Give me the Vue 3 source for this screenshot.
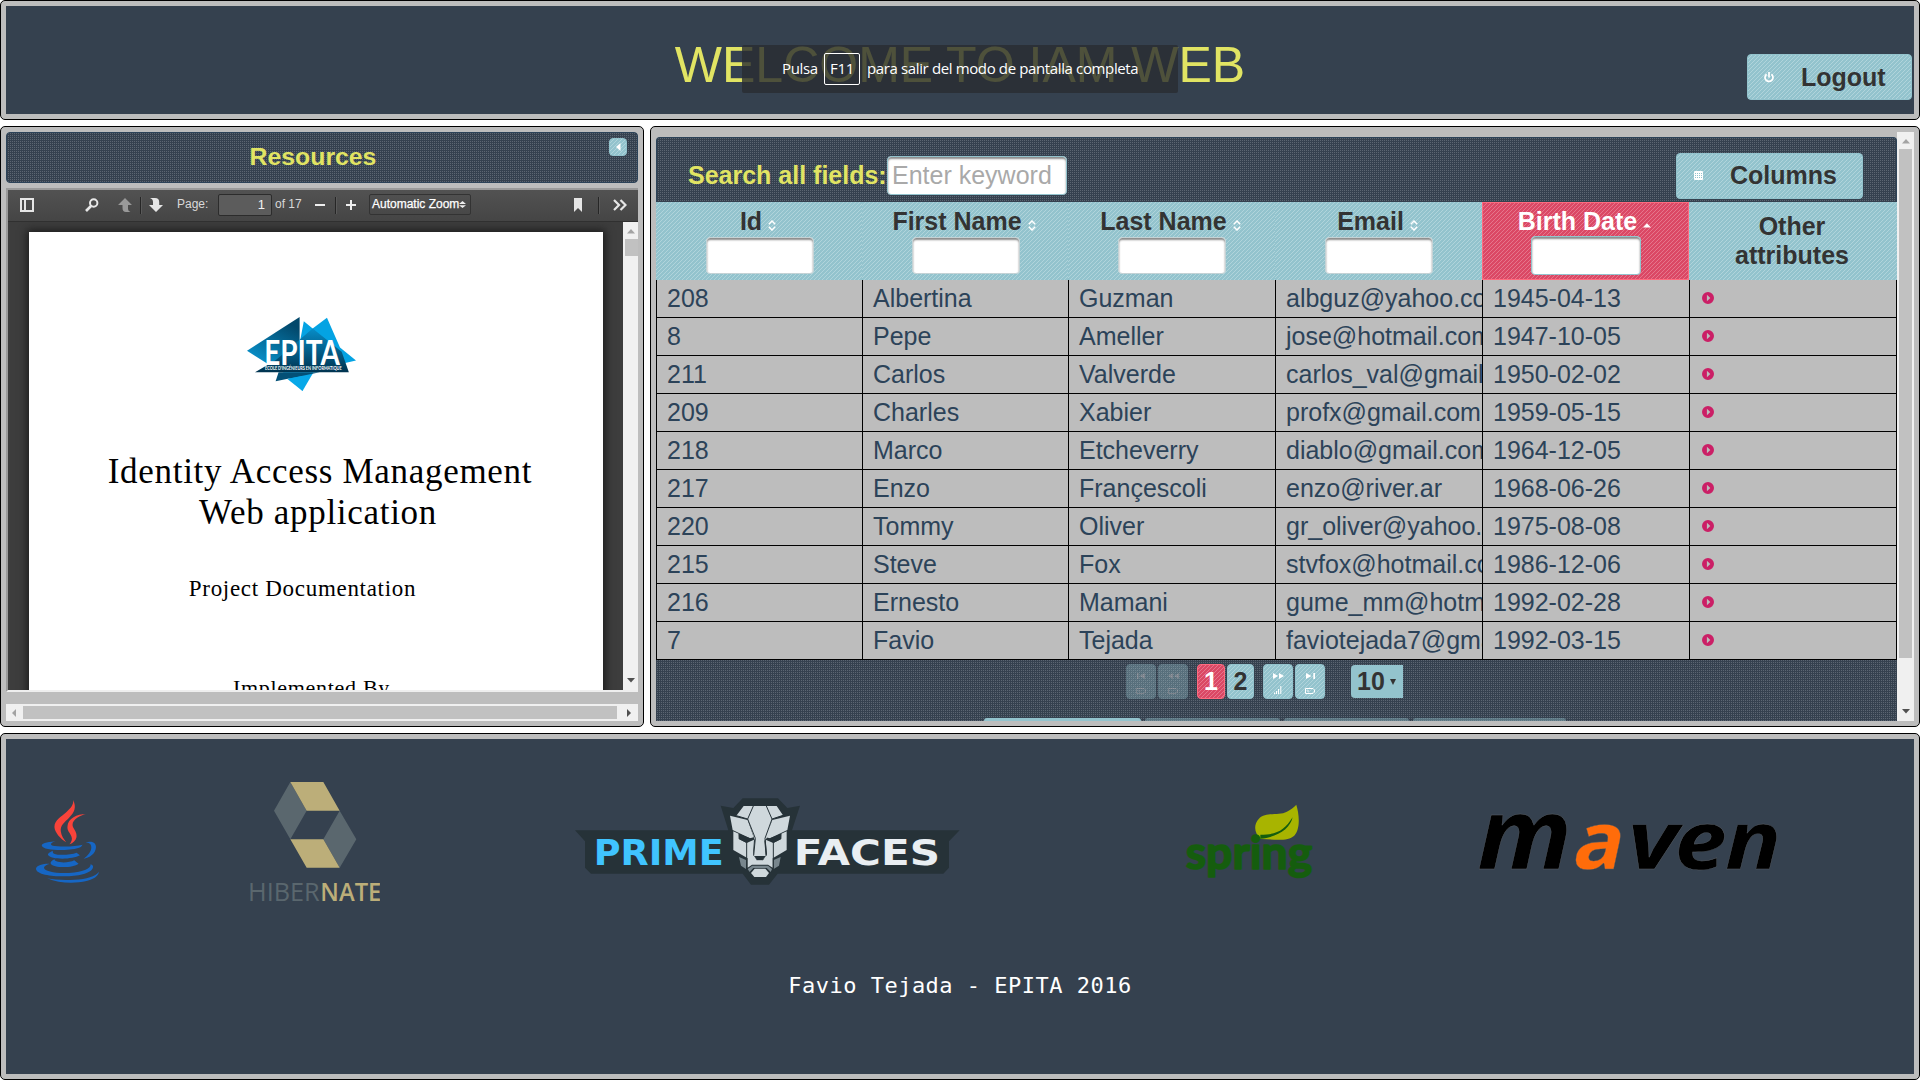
<script setup>
const columns = [
  { label: 'Id', sort: 'both', filter: true },
  { label: 'First Name', sort: 'both', filter: true },
  { label: 'Last Name', sort: 'both', filter: true },
  { label: 'Email', sort: 'both', filter: true },
  { label: 'Birth Date', sort: 'asc', filter: true, active: true },
  { label: 'Other attributes' },
]

const rows = [
  ['208', 'Albertina', 'Guzman', 'albguz@yahoo.com', '1945-04-13'],
  ['8', 'Pepe', 'Ameller', 'jose@hotmail.com', '1947-10-05'],
  ['211', 'Carlos', 'Valverde', 'carlos_val@gmail.com', '1950-02-02'],
  ['209', 'Charles', 'Xabier', 'profx@gmail.com', '1959-05-15'],
  ['218', 'Marco', 'Etcheverry', 'diablo@gmail.com', '1964-12-05'],
  ['217', 'Enzo', 'Françescoli', 'enzo@river.ar', '1968-06-26'],
  ['220', 'Tommy', 'Oliver', 'gr_oliver@yahoo.com', '1975-08-08'],
  ['215', 'Steve', 'Fox', 'stvfox@hotmail.com', '1986-12-06'],
  ['216', 'Ernesto', 'Mamani', 'gume_mm@hotmail.com', '1992-02-28'],
  ['7', 'Favio', 'Tejada', 'faviotejada7@gmail.com', '1992-03-15'],
]
</script>

<template>
  <div class="page">
    <header class="pane north">
      <div class="pane-body north-body">
        <h1>WELCOME TO IAM WEB</h1>
        <button class="btn diag logout">
          <svg width="10" height="11" viewBox="0 0 10 11" fill="none" stroke="#fff" stroke-width="1.7">
            <path d="M2.6 2.2A4 4 0 1 0 7.4 2.2M5 0V5.6" />
          </svg>
          <span>Logout</span>
        </button>
      </div>
      <div class="toast">
        <span>Pulsa</span><kbd>F11</kbd><span class="long">para salir del modo de pantalla completa</span>
      </div>
    </header>

    <section class="pane west">
      <div class="west-title dots">
        <h2>Resources</h2>
        <button class="toggler diag">
          <svg width="5" height="8" viewBox="0 0 5 8"><path d="M4.5 0V8L0 4Z" fill="#fff" /></svg>
        </button>
      </div>

      <div class="frame">
        <div class="toolbar">
          <svg class="ic-side" width="14" height="14" viewBox="0 0 14 14"><path fill-rule="evenodd" fill="#e6e6e6" d="M0 0H14V14H0ZM2 2V12H4V2ZM6 2V12H12V2Z" /></svg>
          <svg class="ic-search" width="14" height="14" viewBox="0 0 14 14" fill="none" stroke="#e8e8e8"><circle cx="8.7" cy="5" r="3.7" stroke-width="2" /><path d="M6 8 1 13" stroke-width="2.6" /></svg>
          <svg class="ic-up" width="14" height="14" viewBox="0 0 14 14"><path fill="#999" d="M7 0 14 7H10V11Q10 13 12.5 14H8Q4.500 14 4.500 10V7H0Z" /></svg>
          <i class="sep"></i>
          <svg class="ic-down" width="14" height="14" viewBox="0 0 14 14"><path fill="#e6e6e6" d="M7 14 14 7H10.200V4Q10.200 0 6 0H1Q4 1 4 4V7H0Z" /></svg>
          <span class="tb-label">Page:</span>
          <span class="tb-page">1</span>
          <span class="tb-of">of 17</span>
          <svg class="ic-minus" width="10" height="10" viewBox="0 0 10 10"><path fill="#eee" d="M0 4H10V6H0Z" /></svg>
          <i class="sep"></i>
          <svg class="ic-plus" width="10" height="10" viewBox="0 0 10 10"><path fill="#eee" d="M0 4H4V0H6V4H10V6H6V10H4V6H0Z" /></svg>
          <span class="tb-zoom">Automatic Zoom<svg width="7" height="7" viewBox="0 0 7 7"><path fill="#eee" d="M0 3 3.500 0 7 3ZM0 4.200H7L3.500 7Z" /></svg></span>
          <svg class="ic-mark" width="8" height="14" viewBox="0 0 8 14"><path fill="#e6e6e6" d="M0 0H8V14L4 10 0 14Z" /></svg>
          <i class="sep"></i>
          <svg class="ic-more" width="14" height="12" viewBox="0 0 14 12" fill="none" stroke="#e6e6e6" stroke-width="2.200"><path d="M1 1 6 6 1 11M7.500 1 12.500 6 7.500 11" /></svg>
        </div>
        <div class="viewer">
          <div class="doc">
            <svg class="epita" viewBox="587 621 259 221" preserveAspectRatio="none">
              <defs>
                <linearGradient id="ea" x1="0" y1="1" x2="0.6" y2="0"><stop offset="0" stop-color="#0aa0de" /><stop offset="1" stop-color="#02486b" /></linearGradient>
                <linearGradient id="eb" x1="0" y1="0" x2="0" y2="1"><stop offset="0" stop-color="#078dc8" /><stop offset="1" stop-color="#00334f" /></linearGradient>
              </defs>
              <path d="M587 722 712 621V700L700 740 650 772Z" fill="url(#ea)" />
              <path d="M712 700 722 634 743 655 777 623 808 712 846 751 815 760 720 770Z" fill="#04a3e3" />
              <path d="M655 750 743 655 812 725 829 786H606Z" fill="url(#eb)" />
              <path d="M672 786H745L719 842Z" fill="#08a8e8" />
              <path d="M662 786H760L655 813Z" fill="#035076" />
              <path d="M719 797V842L683 806Z" fill="#08a8e8" />
              <text x="628" y="764" textLength="180" lengthAdjust="spacingAndGlyphs" class="epita-name">EPITA</text>
              <text x="630" y="780" textLength="182" lengthAdjust="spacingAndGlyphs" class="epita-sub">ÉCOLE D'INGÉNIEURS EN INFORMATIQUE</text>
            </svg>
            <p class="doc-title">Identity Access Management</p>
            <p class="doc-title second">Web application</p>
            <p class="doc-sub">Project Documentation</p>
            <p class="doc-by">Implemented By</p>
          </div>
          <div class="vbar thin">
            <svg width="8" height="5" viewBox="0 0 8 5"><path d="M0 4.500 4 0 8 4.500Z" fill="#a3a3a3" /></svg>
            <i class="thumb"></i>
            <svg width="8" height="5" viewBox="0 0 8 5"><path d="M0 0H8L4 4.500Z" fill="#505050" /></svg>
          </div>
        </div>
      </div>

      <div class="hbar">
        <svg width="4" height="8" viewBox="0 0 4 8"><path d="M4 0V8L0 4Z" fill="#a3a3a3" /></svg>
        <i class="thumb"></i>
        <svg width="4" height="8" viewBox="0 0 4 8"><path d="M0 0V8L4 4Z" fill="#505050" /></svg>
      </div>
    </section>

    <main class="pane center">
      <div class="table-area">
        <div class="table-head dots">
          <label>Search all fields:</label>
          <input class="search" placeholder="Enter keyword" />
          <button class="btn diag columns">
            <svg width="9" height="9" viewBox="0 0 9 9"><rect width="9" height="9" rx="1" fill="#fff" /><path d="M1 2.500h7M1 4.500h7M1 6.500h7" stroke="#93c3cd" stroke-width="1" stroke-dasharray="1 1" /></svg>
            <span>Columns</span>
          </button>
        </div>

        <div class="grid head">
          <div v-for="c in columns" :key="c.label" class="th diag" :class="{ active: c.active, plain: !c.filter }">
            <div class="th-label">
              <span>{{ c.label }}</span>
              <svg v-if="c.sort === 'both'" width="8" height="11" viewBox="0 0 8 11" fill="none" stroke="#fff" stroke-width="1.500"><path d="M.8 4.200 4 1 7.200 4.200M.8 6.800 4 10 7.200 6.800" /></svg>
              <svg v-else-if="c.sort" width="8" height="11" viewBox="0 0 8 11"><path d="M0 7.500 4 3.300 8 7.500Z" fill="#fff" /></svg>
            </div>
            <input v-if="c.filter" />
          </div>
        </div>

        <div v-for="r in rows" :key="r[0]" class="grid row">
          <div v-for="(v, i) in r" :key="i" class="td">{{ v }}</div>
          <div class="td">
            <svg class="expand" width="12" height="12" viewBox="0 0 12 12"><path fill-rule="evenodd" fill="#cb1f66" d="M6 0A6 6 0 0 1 6 12A6 6 0 0 1 6 0ZM4.900 2.800V9.200L8.300 6Z" /></svg>
          </div>
        </div>

        <div class="paginator dots">
          <div class="pages">
            <span class="pg nav diag off">
              <svg width="8" height="6" viewBox="0 0 8 6"><path d="M0 0H1.500V6H0ZM8 0V6L2.500 3Z" fill="#fff" /></svg>
              <svg width="10" height="6" viewBox="0 0 10 6"><path d="M.5.5H8L9.500 2V4L8 5.500H.5ZM3 2V4" fill="none" stroke="#fff" /></svg>
            </span>
            <span class="pg nav diag off">
              <svg width="11" height="6" viewBox="0 0 11 6"><path d="M5 0V6L0 3ZM11 0V6L6 3Z" fill="#fff" /></svg>
              <svg width="10" height="6" viewBox="0 0 10 6"><path d="M.5.5H8L9.500 2V4L8 5.500H.5Z" fill="none" stroke="#fff" /></svg>
            </span>
            <span class="pg num diag active">1</span>
            <span class="pg num two diag">2</span>
            <span class="pg nav diag">
              <svg width="11" height="6" viewBox="0 0 11 6"><path d="M0 0V6L5 3ZM6 0V6L11 3Z" fill="#fff" /></svg>
              <svg width="8" height="8" viewBox="0 0 8 8"><path d="M.5 8V6.500M2.500 8V5M4.500 8V3M6.800 8V0" stroke="#fff" /></svg>
            </span>
            <span class="pg nav diag">
              <svg width="9" height="6" viewBox="0 0 9 6"><path d="M0 0V6L5.500 3ZM7.300 0H9V6H7.300Z" fill="#fff" /></svg>
              <svg width="10" height="6" viewBox="0 0 10 6"><path d="M.5.5H8L9.500 2V4L8 5.500H.5ZM3 2V4" fill="none" stroke="#fff" /></svg>
            </span>
            <span class="rpp">10<svg width="6" height="6" viewBox="0 0 6 6"><path d="M0 0H6L3 6Z" fill="#333" /></svg></span>
          </div>
          <div class="tabs">
            <i class="tab on"></i><i class="tab b"></i><i class="tab c"></i><i class="tab d"></i>
          </div>
        </div>
      </div>
      <div class="vbar wide">
        <svg width="8" height="5" viewBox="0 0 8 5"><path d="M0 4.500 4 0 8 4.500Z" fill="#a3a3a3" /></svg>
        <i class="thumb"></i>
        <svg width="8" height="5" viewBox="0 0 8 5"><path d="M0 0H8L4 4.500Z" fill="#505050" /></svg>
      </div>
    </main>

    <footer class="pane south">
      <div class="pane-body south-body">
        <div class="logos">
          <svg class="java" viewBox="107 210 188 249" preserveAspectRatio="none">
            <path fill="#f8433a" d="M218 210C228 232 222 246 207 262C192 278 179 286 181 304C182 317 190 327 197 337C180 326 163 308 162 291C162 270 182 261 198 246C213 232 219 224 218 210Z" />
            <path fill="#f8433a" d="M256 252C240 256 216 267 216 285C217 297 230 304 228 321C226 332 217 339 207 343C213 334 216 329 213 320C209 309 199 302 201 289C202 265 230 252 256 252Z" />
            <g fill="#1666c4">
              <path d="M166 334C151 335 124 339 124 346C125 359 165 361 192 360C215 359 232 356 241 351L246 344C222 351 172 350 157 347C148 344 151 338 166 334Z" />
              <path d="M255 337C271 332 286 336 286 351C286 370 266 385 249 386C262 377 273 364 272 351C271 341 264 338 255 337Z" />
              <path d="M157 362C150 366 141 370 143 375C150 389 214 390 238 376L228 368C211 375 174 377 161 371C157 369 157 365 157 362Z" />
              <path d="M163 388C155 391 149 396 151 401C158 414 217 415 234 401L221 391C208 398 181 399 168 394C163 392 162 390 163 388Z" />
              <path d="M147 401C130 400 106 406 107 417C109 434 156 440 199 439C239 438 281 428 277 407L270 402C272 413 254 426 205 429C164 431 132 423 131 414C131 407 140 404 147 401Z" />
              <path d="M295 425C284 439 258 447 222 449C190 451 162 449 140 445C168 458 207 460 235 457C268 453 292 443 295 425Z" />
            </g>
          </svg>

          <svg class="hibernate" viewBox="750 156 390 360" preserveAspectRatio="none">
            <path fill="#5a676e" d="M871 156 920 242 871 328 822 242ZM1019 242 1069 328 1019 413 970 328Z" />
            <path fill="#bcae79" d="M871 156H970L1019 242H920ZM871 328H970L1019 413H920Z" />
            <text x="744" y="513" textLength="215" lengthAdjust="spacingAndGlyphs" class="hib light">HIBER</text>
            <text x="961" y="513" textLength="183" lengthAdjust="spacingAndGlyphs" class="hib">NATE</text>
          </svg>

          <svg class="prime" viewBox="45 84 1155 261" preserveAspectRatio="none">
            <path fill="#263238" d="M45 181H505L482 107 520 114 548 85H654L682 114 720 107 696 181H1199L1167 214V293L1150 311H653L627 344H573L548 311H93L75 293V214Z" />
            <path fill="#cfd8dc" d="M551 108H650L669 136 637 147 620 205 613 212 617 259 606 271H592L580 259 585 212 563 147 529 137Z" />
            <path fill="#cfd8dc" d="M510 137 563 150 581 202 570 205 518 180ZM690 137 637 150 617 202 630 205 682 180Z" />
            <path fill="#cfd8dc" d="M520 184 536 191V207L560 219 582 209 579 252 590 271H609L621 252 617 209 640 219 664 207V191L680 184V240L638 265V293L624 284H576L563 293V265L520 240Z" />
            <path fill="#78868d" d="M537 261 558 270V297L543 287ZM662 261 641 270V297L657 287ZM563 297 577 287H624L636 297 632 306 620 294H580L569 306Z" />
            <path fill="#cfd8dc" d="M584 296H616L627 309 618 321H583L573 309Z" />
            <path fill="#263238" d="M536 191 575 206 560 219 537 207ZM664 191 625 206 640 219 663 207ZM582 258H617L608 270H591Z" />
            <path fill="none" stroke="#263238" stroke-width="3" d="M580 108 563 147 586 205M619 108 636 147 615 205M529 137 563 147M669 136 636 147M586 205 581 257M615 205 619 257M560 219V296M640 219V296" />
            <text x="101" y="284" textLength="390" lengthAdjust="spacingAndGlyphs" class="pf blue">PRIME</text>
            <text x="701" y="284" textLength="439" lengthAdjust="spacingAndGlyphs" class="pf">FACES</text>
          </svg>

          <svg class="spring" viewBox="60 76 316 225" preserveAspectRatio="none">
            <path fill="#a8b400" d="M335 78C342 104 346 150 330 171C315 188 285 183 248 181C233 165 229 140 243 121C261 98 292 112 312 99Q328 88 335 78Z" />
            <path fill="#155d0e" d="M326 116C320 151 288 176 247 180V168C289 168 306 155 326 116Z" />
            <text x="64" y="272" textLength="310" lengthAdjust="spacingAndGlyphs" class="spring-name">spring</text>
          </svg>

          <svg class="maven" viewBox="783 96 735 177" preserveAspectRatio="none">
            <text x="779" y="267" textLength="232" lengthAdjust="spacingAndGlyphs" class="mv big">m</text>
            <text transform="translate(1006 267) skewX(-10)" textLength="122" lengthAdjust="spacingAndGlyphs" class="mv orange">a</text>
            <text x="1147" y="267" textLength="123" lengthAdjust="spacingAndGlyphs" class="mv">v</text>
            <text x="1262" y="267" textLength="128" lengthAdjust="spacingAndGlyphs" class="mv">e</text>
            <text x="1386" y="267" textLength="138" lengthAdjust="spacingAndGlyphs" class="mv">n</text>
          </svg>
        </div>
        <p class="credit">Favio Tejada - EPITA 2016</p>
      </div>
    </footer>
  </div>
</template>

<style>
body {
  background: #fff;
  overflow: hidden;
}
</style>

<style scoped>
* {
  box-sizing: border-box;
}
.page {
  width: 1920px;
  height: 1080px;
  display: grid;
  grid-template-columns: 644px 1270px;
  grid-template-rows: 120px 601px 347px;
  gap: 6px;
  font-family: "Liberation Sans", Arial, sans-serif;
  font-size: 25px;
  color: #2c4359;
}
h1, h2, p {
  margin: 0;
  font-weight: normal;
}
svg {
  display: block;
  flex: none;
}
.pane {
  border: 1px solid #000;
  border-radius: 5px;
  background: #bdbdbd;
  padding: 5px;
  overflow: hidden;
  min-width: 0;
}
.pane-body {
  height: 100%;
  background: #35414f;
}
.dots {
  background: conic-gradient(at 1px 1px, #5c6672 25%, transparent 0) 0 0 / 2px 2px #35414f;
}
.diag {
  background: linear-gradient(135deg, transparent 40%, #b0d4db 40%, #b0d4db 60%, transparent 60%) 0 0 / 4px 4px #93c3cd;
}
.diag.active {
  background: linear-gradient(135deg, transparent 40%, #e5768c 40%, #e5768c 60%, transparent 60%) 0 0 / 4px 4px #db4865;
}

/* header */
.north, .south {
  grid-column: 1 / 3;
}
.north {
  position: relative;
}
.north-body {
  display: grid;
  grid-template-columns: 1fr auto 1fr;
  align-items: start;
}
h1 {
  grid-column: 2;
  font-size: 50px;
  line-height: 58px;
  padding-top: 30px;
  color: #e1e463;
}
.btn {
  height: 46px;
  border: 1px solid #93c3cd;
  border-radius: 4px;
  font: bold 25px "Liberation Sans", Arial, sans-serif;
  color: #333;
  display: flex;
  align-items: center;
  padding: 0;
}
.logout {
  justify-self: end;
  width: 165px;
  margin: 48px 2px 0 0;
  padding-left: 16px;
  gap: 27px;
}
.toast {
  position: absolute;
  left: 741px;
  top: 44px;
  width: 436px;
  height: 48px;
  border-radius: 2px;
  background: rgba(41, 44, 49, 0.8);
  color: #fff;
  font: 15px/30px "Open Sans", "Noto Sans", sans-serif;
  letter-spacing: -0.37px;
  display: flex;
  align-items: center;
  padding-left: 40px;
  white-space: nowrap;
}
.toast span {
  margin-top: -2px;
}
.toast kbd {
  font: inherit;
  width: 36px;
  height: 32px;
  line-height: 29px;
  border: 1px solid #fff;
  border-radius: 2px;
  text-align: center;
  margin: 0 7px 0 auto;
}
.toast .long {
  width: 311px;
}

/* left pane */
.west {
  display: flex;
  flex-direction: column;
}
.west-title {
  height: 51px;
  border: 1px solid #2c4359;
  border-radius: 4px;
  display: flex;
  padding: 5px 10px 0 0;
}
h2 {
  flex: 1;
  font-size: 24.8px;
  line-height: 37px;
  font-weight: bold;
  text-align: center;
  padding-left: 10px;
  color: #e1e463;
}
.toggler {
  width: 18px;
  height: 18px;
  border: 1px solid #93c3cd;
  border-radius: 4px;
  padding: 0;
  display: flex;
  align-items: center;
  justify-content: center;
}
.frame {
  margin-top: 5px;
  height: 504px;
  border: 2px solid #9a9a9a;
  border-right: 0;
  border-bottom-color: #eee;
  display: flex;
  flex-direction: column;
}
.toolbar {
  height: 32px;
  background: linear-gradient(#525252, #454545);
  border-bottom: 1px solid #303030;
  display: flex;
  align-items: center;
  font-size: 12px;
  color: #d9d9d9;
  white-space: nowrap;
  padding-bottom: 1px;
}
.sep {
  width: 1px;
  height: 17px;
  background: #262626;
  box-shadow: 1px 0 0 #5a5a5a;
  flex: none;
}
.ic-side { margin-left: 12px; }
.ic-search { margin-left: 51px; }
.ic-up { margin: 0 8px 0 19px; }
.ic-down { margin-left: 8px; }
.tb-label { margin: -2px 0 0 14px; width: 41px; }
.tb-page {
  width: 54px;
  height: 22px;
  line-height: 20px;
  border: 1px solid #2c2c2c;
  border-radius: 2px;
  background: #5c5c5c;
  text-align: right;
  padding-right: 6px;
  color: #f2f2f2;
  font-size: 13px;
}
.tb-of { margin: -2px 0 0 3px; width: 40px; }
.ic-minus { margin-right: 10px; }
.ic-plus { margin: 0 13px 0 10px; }
.tb-zoom {
  width: 102px;
  height: 21px;
  line-height: 19px;
  margin-top: -2px;
  border: 1px solid #333;
  border-radius: 2px;
  color: #fff;
  -webkit-text-stroke: 0.25px #fff;
  padding-left: 2px;
  display: flex;
  align-items: center;
}
.ic-mark { margin: 0 16px 0 103px; }
.ic-more { margin-left: 14px; }
.viewer {
  flex: 1;
  min-height: 0;
  display: flex;
  background: #3d3d3d;
  overflow: hidden;
}
.doc {
  width: 574px;
  height: 480px;
  margin: 10px 20px 0 21px;
  background: #fff;
  box-shadow: 0 0 8px 2px #1c1c1c;
  color: #000;
  font-family: "Liberation Serif", serif;
  text-align: center;
}
.epita {
  width: 109px;
  height: 74px;
  margin: 85px 0 0 218px;
}
.epita-name {
  font: bold 100px "Lato", sans-serif;
  fill: #fff;
}
.epita-sub {
  font: bold 14px "Lato", sans-serif;
  fill: #fff;
}
.doc-title {
  font-size: 35px;
  letter-spacing: 0.7px;
  line-height: 41px;
  margin-top: 60px;
  padding-left: 8px;
  white-space: nowrap;
}
.doc-title.second {
  margin: 0;
  padding-left: 4px;
}
.doc-sub {
  font-size: 23px;
  letter-spacing: 0.7px;
  line-height: 28px;
  margin-top: 42px;
  padding-right: 27px;
}
.doc-by {
  font-size: 22px;
  letter-spacing: 0.7px;
  line-height: 28px;
  margin-top: 71px;
  padding-right: 9px;
}

/* scrollbars */
.vbar {
  background: #f0f0f0;
  display: flex;
  flex-direction: column;
  align-items: center;
  flex: none;
}
.vbar .thumb, .hbar .thumb {
  background: #c1c1c1;
}
.vbar.thin { width: 15px; }
.vbar.thin svg:first-child { margin: 7px 0 5px; }
.vbar.thin .thumb { width: 13px; height: 17px; align-self: flex-end; margin-bottom: auto; }
.vbar.thin svg:last-child { margin-bottom: 7px; }
.vbar.wide { width: 17px; }
.vbar.wide svg:first-child { margin: 7px 0 5px; }
.vbar.wide .thumb { width: 13px; height: 509px; margin-bottom: auto; }
.vbar.wide svg:last-child { margin-bottom: 7px; }
.hbar {
  margin-top: 12px;
  height: 17px;
  background: #f0f0f0;
  display: flex;
  align-items: center;
  padding: 0 7px 0 6px;
}
.hbar .thumb {
  height: 13px;
  width: 594px;
  margin: 0 auto 0 7px;
}

/* data table */
.center {
  display: flex;
}
.table-area {
  width: 1241px;
  height: 589px;
  padding-top: 5px;
  overflow: hidden;
}
.table-head {
  height: 65px;
  border-radius: 4px 4px 0 0;
  border: 1px solid #2c4359;
  border-bottom: 0;
  display: flex;
  align-items: center;
  padding: 11px 33px 0 31px;
}
.table-head label {
  font-weight: bold;
  color: #e1e463;
  width: 199px;
  white-space: nowrap;
}
input {
  font: 25px "Liberation Sans", Arial, sans-serif;
  border: 1px solid #c4d2d5;
  border-radius: 4px;
  background: #fff;
  box-shadow: inset 0 2px 2px #8b8b8b;
  outline: 0;
  padding: 0 4px;
}
input::placeholder {
  color: #a9a9a9;
}
.search {
  width: 180px;
  height: 39px;
  border-color: #93c3cd;
}
.columns {
  width: 187px;
  margin-left: auto;
  padding-left: 17px;
  gap: 27px;
}
.grid {
  display: grid;
  grid-template-columns: 206px 206px 207px 207px 207px 208px;
}
.th {
  height: 78px;
  padding-top: 5px;
  color: #333;
  font-weight: bold;
  line-height: 29px;
  text-align: center;
  display: flex;
  flex-direction: column;
  align-items: center;
}
.th.active {
  color: #fff;
  border: 1px solid #ff6b7f;
  padding-top: 4px;
}
.th.plain {
  justify-content: center;
  padding: 0 40px;
}
.th-label {
  display: flex;
  align-items: center;
  gap: 6px;
  margin-right: 2px;
}
.th-label svg {
  margin-top: 7px;
}
.th input {
  width: 108px;
  height: 37px;
  margin: 1px 0 0 1px;
}
.th.active input {
  width: 110px;
  height: 39px;
  margin-top: 0;
  border-color: #93c3cd;
}
.td {
  height: 38px;
  line-height: 37px;
  border-left: 1px solid #000;
  border-bottom: 1px solid #000;
  padding-left: 10px;
  overflow: hidden;
  white-space: nowrap;
}
.td:last-child {
  border-right: 1px solid #000;
}
.expand {
  margin: 12px 0 0 2px;
}
.paginator {
  height: 61px;
  display: flex;
  flex-direction: column;
  justify-content: space-between;
}
.pages {
  display: flex;
  margin: 4px 0 0 470px;
}
.pg {
  height: 35px;
  border: 1px solid #93c3cd;
  border-radius: 4px;
  color: #333;
  font-weight: bold;
  display: flex;
  align-items: center;
  justify-content: center;
}
.pg.nav {
  width: 30px;
  margin-right: 2px;
  flex-direction: column;
  justify-content: space-between;
  padding: 8px 0 4px;
}
.pg.off {
  opacity: 0.35;
}
.pg.num {
  width: 28px;
  margin: 0 2px 0 0;
}
.pg.active {
  color: #fff;
  border-color: #ff6b7f;
  margin-left: 7px;
}
.pg.two {
  width: 27px;
  margin-right: 9px;
}
.rpp {
  width: 52px;
  height: 33px;
  margin: 1px 0 0 24px;
  border-radius: 4px 0 0 4px;
  background: #93c3cd;
  color: #333;
  font-weight: bold;
  display: flex;
  align-items: center;
  gap: 5px;
  padding-left: 6px;
}
.tabs {
  display: flex;
  gap: 4px;
  padding-left: 328px;
}
.tab {
  height: 3px;
  border-radius: 3px 3px 0 0;
  background: #93c3cd;
  opacity: 0.4;
  width: 135px;
}
.tab.on { width: 157px; opacity: 1; }
.tab.c { width: 125px; }
.tab.d { width: 153px; }

/* footer */
.south-body {
  display: flex;
  flex-direction: column;
}
.logos {
  height: 205px;
  display: flex;
  align-items: center;
}
.java { width: 63px; height: 83px; margin-left: 30px; }
.hibernate { width: 130px; height: 120px; margin-left: 151px; }
.prime { width: 385px; height: 87px; margin-left: 195px; }
.spring { width: 129px; height: 75px; margin-left: 224px; overflow: visible; }
.maven { width: 300px; height: 59px; margin-left: 166px; overflow: visible; }
.hib {
  font: 600 74px "Open Sans", sans-serif;
  fill: #bcae79;
}
.hib.light {
  font-weight: normal;
  fill: #5a676e;
}
.pf {
  font: bold 108px "DejaVu Sans", sans-serif;
  fill: #e9eef2;
}
.pf.blue {
  fill: #40c4ff;
}
.spring-name {
  font: bold 136px "Lato", sans-serif;
  fill: #155d0e;
  stroke: #155d0e;
  stroke-width: 5;
  stroke-linejoin: round;
}
.mv {
  font: italic bold 240px "Open Sans", sans-serif;
  fill: #000;
  stroke: #5b6066;
  stroke-width: 1;
}
.mv.big {
  font-size: 298px;
}
.mv.orange {
  font-style: normal;
  fill: #ff6c0a;
}
.credit {
  text-align: center;
  font: 22px/28px "DejaVu Sans Mono", monospace;
  letter-spacing: 0.5px;
  color: #fff;
  margin-top: 28px;
}
</style>
